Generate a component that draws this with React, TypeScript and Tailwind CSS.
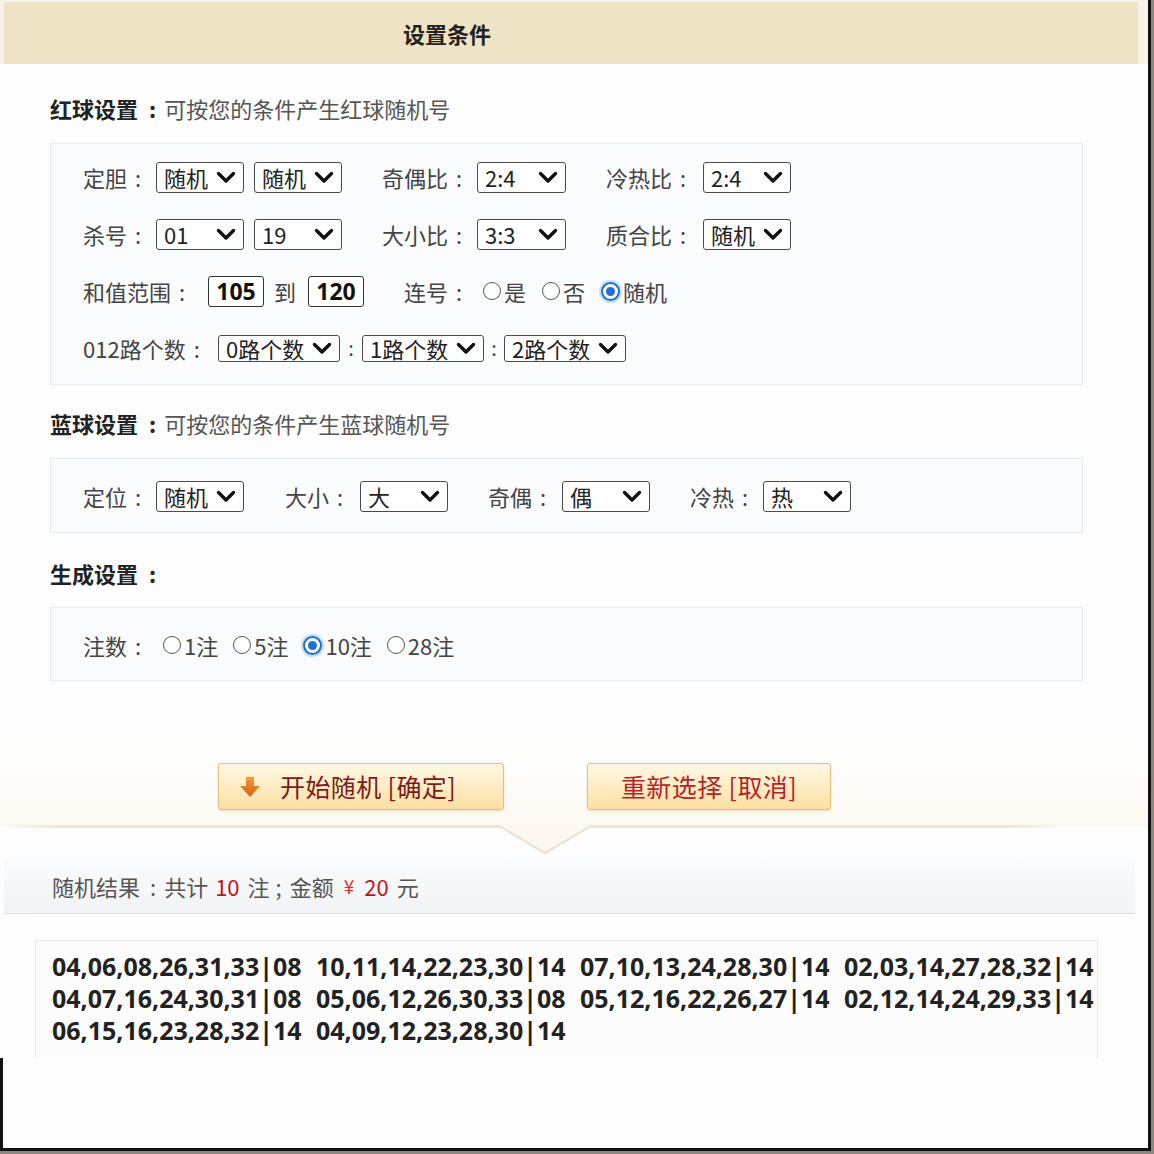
import React from "react";

const cjk = "font-['Noto_Sans_CJK_SC',sans-serif]";

function Chevron() {
  return (
    <svg width="20" height="13" viewBox="0 0 20 13" className="shrink-0">
      <polyline
        points="2.5,2.5 10,10 17.5,2.5"
        fill="none"
        stroke="#111"
        strokeWidth="3.4"
        strokeLinecap="round"
        strokeLinejoin="round"
      />
    </svg>
  );
}

function Select({ value, className = "" }: { value: string; className?: string }) {
  return (
    <div
      className={`flex items-center justify-between border border-[#4a4a4a] rounded-[3px] bg-white pl-[7px] pr-[7px] text-[22px] leading-none text-[#222] shrink-0 ${className}`}
    >
      <span>{value}</span>
      <Chevron />
    </div>
  );
}

// label text followed by a spaced colon, as on the page
function Label({ text, className = "" }: { text: string; className?: string }) {
  return (
    <span className={`text-[22px] leading-none text-[#444] shrink-0 ${className}`}>
      {text}
      <span className="ml-[8px]">:</span>
    </span>
  );
}

function Radio({ label, checked }: { label: string; checked?: boolean }) {
  return (
    <span className="flex items-center gap-[3px] text-[22px] leading-none text-[#444]">
      {checked ? (
        <span className="w-[19px] h-[19px] rounded-full border-[2px] border-[#1f6fd6] bg-white flex items-center justify-center shadow-[0_0_0_2px_#c7ddf7]">
          <span className="w-[9px] h-[9px] rounded-full bg-[#1f6fd6]" />
        </span>
      ) : (
        <span className="w-[18px] h-[18px] rounded-full border-[1.5px] border-[#555] bg-white" />
      )}
      {label}
    </span>
  );
}

function NumBox({ value, className = "" }: { value: string; className?: string }) {
  return (
    <span
      className={`w-[56px] h-[31px] border border-[#333] rounded-[3px] bg-white flex items-center justify-center font-['Open_Sans',sans-serif] font-bold text-[23px] text-[#111] shrink-0 ${className}`}
    >
      {value}
    </span>
  );
}

function Heading({ title, sub, className = "" }: { title: string; sub?: string; className?: string }) {
  return (
    <div className={`ml-[50px] h-[30px] flex items-center text-[22px] ${className}`}>
      <span className="font-bold text-[#222]">
        {title}
        <span className="ml-[11px] mr-[8px]">:</span>
      </span>
      {sub && <span className="text-[#555]">{sub}</span>}
    </div>
  );
}

const results = [
  "04,06,08,26,31,33|08",
  "10,11,14,22,23,30|14",
  "07,10,13,24,28,30|14",
  "02,03,14,27,28,32|14",
  "04,07,16,24,30,31|08",
  "05,06,12,26,30,33|08",
  "05,12,16,22,26,27|14",
  "02,12,14,24,29,33|14",
  "06,15,16,23,28,32|14",
  "04,09,12,23,28,30|14",
];

export default function App() {
  return (
    <div className={`w-[1154px] h-[1154px] bg-[#8f8681] ${cjk}`}>
      <div className="w-[1151px] h-[1151px] bg-[#fdfdfe] border-r-[3px] border-b-[3px] border-[#111] flex flex-col">
        {/* title bar */}
        <div className="h-[64px] pt-[2px] pl-[4px] pr-[10px] bg-[#f8f3e8]">
          <div className="h-full bg-[#efe3c6] flex items-center pl-[399px] text-[22px] font-bold text-[#222]">
            设置条件
          </div>
        </div>

        {/* red ball */}
        <Heading title="红球设置" sub="可按您的条件产生红球随机号" className="mt-[29px]" />
        <div className="ml-[50px] mt-[20px] w-[1033px] border border-[#e8eaed] bg-[#fafbfc] pt-[17px] pb-[20px] pl-[32px] flex flex-col gap-[25px]">
          <div className="flex items-center h-[32px]">
            <Label text="定胆" className="w-[73px]" />
            <Select value="随机" className="w-[88px] h-[31px]" />
            <Select value="随机" className="w-[88px] h-[31px] ml-[10px]" />
            <Label text="奇偶比" className="w-[95px] ml-[40px]" />
            <Select value="2:4" className="w-[89px] h-[31px]" />
            <Label text="冷热比" className="w-[97px] ml-[40px]" />
            <Select value="2:4" className="w-[88px] h-[31px]" />
          </div>
          <div className="flex items-center h-[32px]">
            <Label text="杀号" className="w-[73px]" />
            <Select value="01" className="w-[88px] h-[31px]" />
            <Select value="19" className="w-[88px] h-[31px] ml-[10px]" />
            <Label text="大小比" className="w-[95px] ml-[40px]" />
            <Select value="3:3" className="w-[89px] h-[31px]" />
            <Label text="质合比" className="w-[97px] ml-[40px]" />
            <Select value="随机" className="w-[88px] h-[31px]" />
          </div>
          <div className="flex items-center h-[32px]">
            <Label text="和值范围" className="w-[125px]" />
            <NumBox value="105" />
            <span className="ml-[10px] text-[22px] leading-none text-[#444]">到</span>
            <NumBox value="120" className="ml-[12px]" />
            <Label text="连号" className="w-[79px] ml-[40px]" />
            <div className="flex items-center gap-[16px]">
              <Radio label="是" />
              <Radio label="否" />
              <Radio label="随机" checked />
            </div>
          </div>
          <div className="flex items-center h-[32px]">
            <Label text="012路个数" className="w-[135px]" />
            <Select value="0路个数" className="w-[122px] h-[27px] pl-[6px]" />
            <span className="w-[22px] text-center text-[20px] text-[#444]">:</span>
            <Select value="1路个数" className="w-[122px] h-[27px] pl-[6px]" />
            <span className="w-[20px] text-center text-[20px] text-[#444]">:</span>
            <Select value="2路个数" className="w-[122px] h-[27px] pl-[6px]" />
          </div>
        </div>

        {/* blue ball */}
        <Heading title="蓝球设置" sub="可按您的条件产生蓝球随机号" className="mt-[23px]" />
        <div className="ml-[50px] mt-[20px] w-[1033px] border border-[#e8eaed] bg-[#fafbfc] pt-[21px] pb-[20px] pl-[32px]">
          <div className="flex items-center h-[32px]">
            <Label text="定位" className="w-[73px]" />
            <Select value="随机" className="w-[88px] h-[31px]" />
            <Label text="大小" className="w-[75px] ml-[41px]" />
            <Select value="大" className="w-[88px] h-[31px]" />
            <Label text="奇偶" className="w-[74px] ml-[40px]" />
            <Select value="偶" className="w-[88px] h-[31px]" />
            <Label text="冷热" className="w-[73px] ml-[40px]" />
            <Select value="热" className="w-[88px] h-[31px]" />
          </div>
        </div>

        {/* generate */}
        <Heading title="生成设置" className="mt-[25px]" />
        <div className="ml-[50px] mt-[19px] w-[1033px] border border-[#e8eaed] bg-[#fafbfc] pt-[21px] pb-[19px] pl-[32px]">
          <div className="flex items-center h-[32px]">
            <Label text="注数" className="w-[80px]" />
            <div className="flex items-center gap-[15px]">
              <Radio label="1注" />
              <Radio label="5注" />
              <Radio label="10注" checked />
              <Radio label="28注" />
            </div>
          </div>
        </div>

        {/* buttons */}
        <div className="mt-[27px] pt-[55px] pb-[16px] bg-linear-to-b from-[#fdfdfe] via-[#fdfdfc] to-[#fcf8f1]">
          <div className="flex ml-[218px] gap-[83px]">
            <div className="w-[286px] h-[47px] border border-[#e3bf7c] rounded-[3px] bg-linear-to-b from-[#fff8e4] to-[#fde0a2] shadow-[0_1px_2px_rgba(120,80,20,0.18)] flex items-center pl-[18px] text-[25px] tracking-[0.4px] text-[#7a1c1c]">
              <svg width="26" height="24" viewBox="0 0 26 24">
                <defs>
                  <linearGradient id="arr" x1="0" y1="0" x2="0" y2="1">
                    <stop offset="0" stopColor="#f39a3a" />
                    <stop offset="1" stopColor="#d9600e" />
                  </linearGradient>
                </defs>
                <path d="M9 2h8v9h6L13 22 3 11h6z" fill="url(#arr)" />
              </svg>
              <span className="ml-[17px]">开始随机 [确定]</span>
            </div>
            <div className="w-[244px] h-[47px] border border-[#e3bf7c] rounded-[3px] bg-linear-to-b from-[#fff8e4] to-[#fde0a2] shadow-[0_1px_2px_rgba(120,80,20,0.18)] flex items-center justify-center text-[25px] tracking-[0.4px] text-[#b3242b]">
              重新选择 [取消]
            </div>
          </div>
        </div>
        <svg width="1148" height="32" viewBox="0 0 1148 32" className="-mt-[1px] block">
          <defs>
            <linearGradient id="fade" x1="0" y1="0" x2="1" y2="0">
              <stop offset="0" stopColor="#ece3d4" stopOpacity="0" />
              <stop offset="0.05" stopColor="#ece3d4" />
              <stop offset="0.88" stopColor="#ece3d4" />
              <stop offset="0.93" stopColor="#ece3d4" stopOpacity="0" />
            </linearGradient>
          </defs>
          <polygon points="500,1 545,28 590,1" fill="#fcf8f1" />
          <path d="M0 1.5 H500 L545 28 L590 1.5 H1148" fill="none" stroke="url(#fade)" strokeWidth="2.5" />
        </svg>

        {/* result bar */}
        <div className="mt-[2px] ml-[4px] w-[1131px] h-[55px] bg-linear-to-b from-[#fafbfc] to-[#f1f3f6] border-b border-[#dfe1e4] flex items-center pl-[48px] text-[22px] text-[#555]">
          <span>随机结果</span>
          <span className="ml-[10px]">:</span>
          <span className="ml-[8px]">共计</span>
          <span className="text-[#c0121c] ml-[7px]">10</span>
          <span className="ml-[8px]">注</span>
          <span className="ml-[6px]">;</span>
          <span className="ml-[8px]">金额</span>
          <span className="text-[#e0301e] ml-[10px] text-[19px]">¥</span>
          <span className="text-[#c0121c] ml-[10px]">20</span>
          <span className="ml-[8px]">元</span>
        </div>

        {/* results */}
        <div className="ml-[35px] mt-[26px] w-[1063px] h-[118px] border-t border-l border-r border-[#e6e8eb] bg-[#fcfcfd] pt-[9px] pl-[16px]">
          <div className="grid grid-cols-[264px_264px_264px_264px] font-['Open_Sans',sans-serif] font-bold text-[25px] leading-[32px] text-[#222]">
            {results.map((r, i) => (
              <span key={i}>{r}</span>
            ))}
          </div>
        </div>

        <div className="flex-1 border-l-[3px] border-[#111]" />
      </div>
    </div>
  );
}
